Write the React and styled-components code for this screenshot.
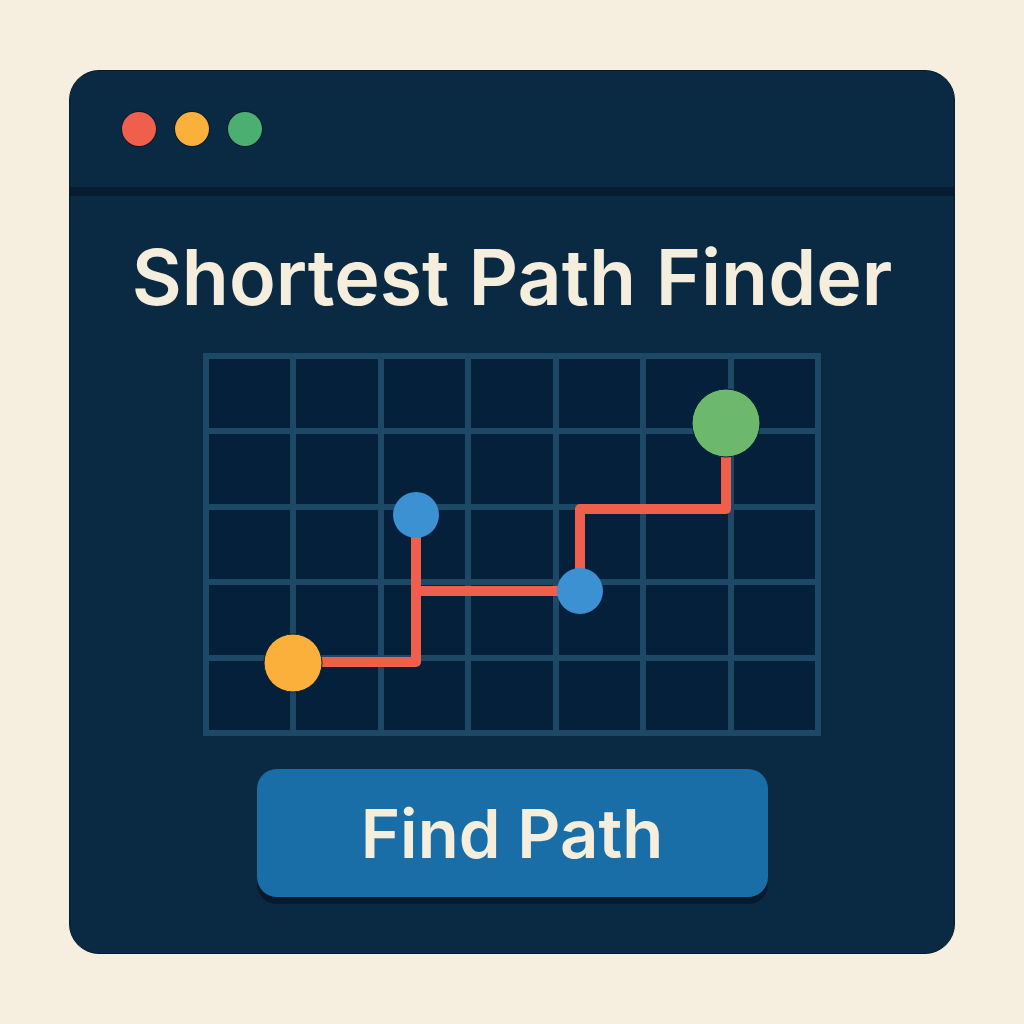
import React from 'react';
import styled, { createGlobalStyle } from 'styled-components';

const GlobalStyle = createGlobalStyle`
  html, body {
    margin: 0;
    padding: 0;
    background: #f6efdf;
  }
`;

const Page = styled.div`
  width: 1024px;
  height: 1024px;
  display: flex;
  align-items: center;
  justify-content: center;
  font-family: 'Inter', 'Open Sans', sans-serif;
`;

const Window = styled.div`
  width: 886px;
  height: 884px;
  box-sizing: border-box;
  background: #0a2a43;
  border: 1px solid #061b2d;
  border-radius: 30px;
  overflow: hidden;
  display: flex;
  flex-direction: column;
`;

const TitleBar = styled.div`
  height: 116px;
  flex-shrink: 0;
  display: flex;
  align-items: center;
  gap: 19px;
  padding-left: 52px;
  border-bottom: 9px solid #061d31;
`;

const Dot = styled.span`
  width: 34px;
  height: 34px;
  border-radius: 50%;
  background: ${p => p.color};
  box-shadow: 0 0 0 1px rgba(0, 0, 0, 0.35);
`;

const Body = styled.div`
  display: flex;
  flex-direction: column;
  align-items: center;
`;

const Title = styled.h1`
  margin: 41px 0 0;
  font-size: 77px;
  line-height: 80px;
  font-weight: 600;
  color: #f5eedc;
`;

const Board = styled.div`
  position: relative;
  margin-top: 36px;
  width: 618px;
  height: 383px;
  box-sizing: border-box;
  padding: 6px;
  background: #1d4966;
  display: grid;
  grid-template-columns: repeat(7, 1fr);
  grid-template-rows: repeat(5, 1fr);
  gap: 6px;
`;

const Cell = styled.div`
  background: #05203a;
`;

const Overlay = styled.svg`
  position: absolute;
  left: 0;
  top: 0;
`;

const Button = styled.button`
  margin-top: 33px;
  width: 511px;
  height: 128px;
  border: none;
  border-radius: 20px;
  background: #1a6ea8;
  color: #f5eedc;
  font-family: inherit;
  font-size: 67px;
  font-weight: 600;
  box-shadow: 0 7px 0 #061a2c;
  cursor: pointer;
`;

const PATH_COLOR = '#ef5f4b';

export default function App() {
  const cells = Array.from({ length: 35 });
  return (
    <>
      <GlobalStyle />
      <Page>
        <Window>
          <TitleBar>
            <Dot color="#ef5f4b" />
            <Dot color="#fbb03b" />
            <Dot color="#4caf72" />
          </TitleBar>
          <Body>
            <Title>Shortest Path Finder</Title>
            <Board>
              {cells.map((_, i) => <Cell key={i} />)}
              <Overlay width="618" height="383" viewBox="0 0 618 383">
                <g fill="none" stroke={PATH_COLOR} strokeWidth="10" strokeLinejoin="round">
                  <polyline points="90,309 213,309 213,162" />
                  <polyline points="213,238 377,238 377,156 523,156 523,70" />
                </g>
                <circle cx="90" cy="310" r="29" fill="#fbb03b" stroke="#0a1f33" strokeWidth="1" />
                <circle cx="213" cy="162" r="23" fill="#3b91d1" />
                <circle cx="377" cy="238" r="23" fill="#3b91d1" />
                <circle cx="523" cy="70" r="34" fill="#6cb96d" stroke="#0a1f33" strokeWidth="1" />
              </Overlay>
            </Board>
            <Button>Find Path</Button>
          </Body>
        </Window>
      </Page>
    </>
  );
}
